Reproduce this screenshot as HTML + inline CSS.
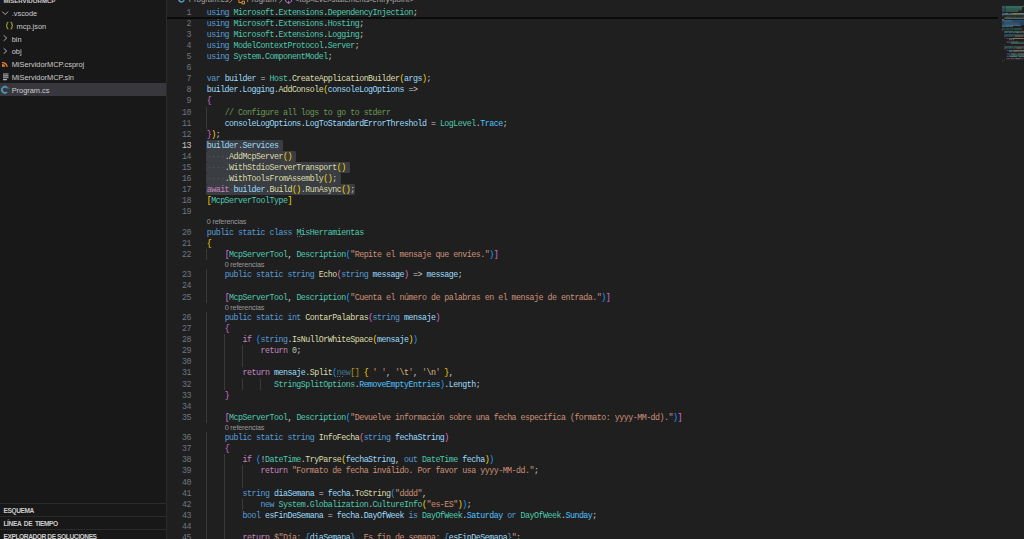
<!DOCTYPE html><html><head><meta charset="utf-8"><style>
*{margin:0;padding:0;box-sizing:border-box}
html,body{width:1024px;height:539px;overflow:hidden;background:#1f1f1f}
body{position:relative;font-family:"Liberation Sans",sans-serif}
#side{position:absolute;left:0;top:0;width:166px;height:539px;background:#181818;overflow:hidden}
#sideb{position:absolute;left:166px;top:0;width:1px;height:539px;background:#2b2b2b}
.row{position:absolute;left:0;width:166px;height:12.9px;color:#cccccc;font-size:7.4px;line-height:12.9px;white-space:nowrap}
.row.selr{background:#37373d}
.row .tx{position:absolute;top:0}
.hdr{position:absolute;left:0;width:166px;height:13px;border-top:1px solid #2b2b2b;color:#cccccc;font-size:6.05px;font-weight:bold;line-height:12px;padding-left:3.5px;white-space:nowrap}
.ln{position:absolute;left:170px;letter-spacing:-0.495px;width:21.00px;text-align:right;color:#6e7681;font-family:"Liberation Mono",monospace;font-size:8.3px;line-height:11.07px;height:11.07px;white-space:pre}
.ln.act{color:#cccccc}
.cl{position:absolute;left:206.7px;letter-spacing:-0.495px;font-family:"Liberation Mono",monospace;font-size:8.3px;line-height:11.07px;height:11.07px;white-space:pre;color:#cccccc}
.lens{position:absolute;font-size:7.2px;letter-spacing:-0.15px;line-height:9.48px;color:#999999;white-space:pre}
.sel{position:absolute;background:#3a3d41;border-radius:1.5px}
.guide{position:absolute;width:1px;background:#3a3a3a}
.mm{position:absolute;height:0.9px;opacity:0.55}
.k{color:#569cd6}.c{color:#c586c0}.t{color:#4ec9b0}.f{color:#dcdcaa}.v{color:#9cdcfe}.s{color:#ce9178}.m{color:#6a9955}.n{color:#b5cea8}.p{color:#cccccc}.e{color:#4fc1ff}.w{color:#5a5a5a}.x{color:#d7ba7d}.b1{color:#ffd700}.b2{color:#da70d6}.b3{color:#179fff}.K{color:#44739a}.B{color:#b59a0a}</style></head><body><div id="side"><div style="position:absolute;left:0;top:83.4px;width:166px;height:12.7px;background:#37373d"></div><div style="position:absolute;left:3.40px;top:0.89px;font-family:'Liberation Sans',sans-serif;font-size:6.1px;line-height:0;color:#cccccc;font-weight:bold;letter-spacing:0px;white-space:pre">MISERVIDORMCP</div><div style="position:absolute;left:11.70px;top:14.04px;font-family:'Liberation Sans',sans-serif;font-size:7.4px;line-height:0;color:#cccccc;font-weight:normal;letter-spacing:0px;white-space:pre">.vscode</div><div style="position:absolute;left:16.60px;top:26.84px;font-family:'Liberation Sans',sans-serif;font-size:7.4px;line-height:0;color:#cccccc;font-weight:normal;letter-spacing:0px;white-space:pre">mcp.json</div><div style="position:absolute;left:11.70px;top:39.64px;font-family:'Liberation Sans',sans-serif;font-size:7.4px;line-height:0;color:#cccccc;font-weight:normal;letter-spacing:0px;white-space:pre">bin</div><div style="position:absolute;left:11.70px;top:52.44px;font-family:'Liberation Sans',sans-serif;font-size:7.4px;line-height:0;color:#cccccc;font-weight:normal;letter-spacing:0px;white-space:pre">obj</div><div style="position:absolute;left:11.70px;top:65.24px;font-family:'Liberation Sans',sans-serif;font-size:7.4px;line-height:0;color:#cccccc;font-weight:normal;letter-spacing:0px;white-space:pre">MiServidorMCP.csproj</div><div style="position:absolute;left:11.70px;top:78.04px;font-family:'Liberation Sans',sans-serif;font-size:7.4px;line-height:0;color:#cccccc;font-weight:normal;letter-spacing:0px;white-space:pre">MiServidorMCP.sln</div><div style="position:absolute;left:11.70px;top:90.84px;font-family:'Liberation Sans',sans-serif;font-size:7.4px;line-height:0;color:#cccccc;font-weight:normal;letter-spacing:0px;white-space:pre">Program.cs</div><div style="position:absolute;left:0;top:503.00px;width:166px;height:1px;background:#2b2b2b"></div><div style="position:absolute;left:3.50px;top:510.51px;font-family:'Liberation Sans',sans-serif;font-size:6.6px;line-height:0;color:#cccccc;font-weight:bold;letter-spacing:-0.41px;white-space:pre;word-spacing:0px">ESQUEMA</div><div style="position:absolute;left:0;top:516.10px;width:166px;height:1px;background:#2b2b2b"></div><div style="position:absolute;left:3.50px;top:523.61px;font-family:'Liberation Sans',sans-serif;font-size:6.6px;line-height:0;color:#cccccc;font-weight:bold;letter-spacing:-0.41px;white-space:pre;word-spacing:1.4px">LÍNEA DE TIEMPO</div><div style="position:absolute;left:0;top:529.20px;width:166px;height:1px;background:#2b2b2b"></div><div style="position:absolute;left:3.50px;top:536.71px;font-family:'Liberation Sans',sans-serif;font-size:6.6px;line-height:0;color:#cccccc;font-weight:bold;letter-spacing:-0.41px;white-space:pre;word-spacing:0px">EXPLORADOR DE SOLUCIONES</div><svg style="position:absolute;left:0;top:0" width="166" height="100" viewBox="0 0 166 100">
<path d="M2.3 11.6 L5.2 14.5 L8.1 11.6" stroke="#c5c5c5" stroke-width="0.85" fill="none"/>
<path d="M8.4 22.3 H7.9 Q7.1 22.3 7.1 23.2 V24.9 L6.1 25.6 L7.1 26.3 V28 Q7.1 28.9 7.9 28.9 H8.4" stroke="#a8c93f" stroke-width="0.9" fill="none"/>
<path d="M10.6 22.3 H11.1 Q11.9 22.3 11.9 23.2 V24.9 L12.9 25.6 L11.9 26.3 V28 Q11.9 28.9 11.1 28.9 H10.6" stroke="#e0c43a" stroke-width="0.9" fill="none"/>
<path d="M3.7 35.4 L6.7 38.1 L3.7 40.8" stroke="#c5c5c5" stroke-width="0.85" fill="none"/>
<path d="M3.7 48.3 L6.7 51.0 L3.7 53.7" stroke="#c5c5c5" stroke-width="0.85" fill="none"/>
<path d="M2 62 A5 5 0 0 1 7.8 66.8 L6.3 66.8 A3.6 3.6 0 0 0 2 63.4 Z M2 64.2 A2.8 2.8 0 0 1 5.3 66.8 L2 66.8 Z" fill="#e37933"/>
<path d="M3 74 H8.5 M3 75.9 H8.5 M3 77.8 H8.5 M3 79.6 H7" stroke="#b0b0b0" stroke-width="1.1" fill="none"/>
<path d="M7.0 87.7 A3.0 3.0 0 1 0 7.0 92.0" stroke="#519aba" stroke-width="1.7" fill="none"/>
<circle cx="7.9" cy="88.0" r="0.7" fill="#519aba"/>
</svg></div><div id="sideb"></div><div style="position:absolute;left:188.80px;top:-0.00px;font-family:'Liberation Sans',sans-serif;font-size:7.8px;line-height:0;color:#a9a9a9;font-weight:normal;letter-spacing:0px;white-space:pre">Program.cs</div><div style="position:absolute;left:246.50px;top:-0.00px;font-family:'Liberation Sans',sans-serif;font-size:7.8px;line-height:0;color:#a9a9a9;font-weight:normal;letter-spacing:0px;white-space:pre">Program</div><div style="position:absolute;left:295.00px;top:-0.00px;font-family:'Liberation Sans',sans-serif;font-size:7.8px;line-height:0;color:#a9a9a9;font-weight:normal;letter-spacing:0px;white-space:pre">&lt;top-level-statements-entry-point&gt;</div><svg style="position:absolute;left:170px;top:0" width="130" height="8" viewBox="170 0 130 8">
<path d="M184.2 0.2 A2.9 2.9 0 1 1 184.4 -1.6" stroke="#519aba" stroke-width="1.5" fill="none"/>
<path d="M229.2 2.9 L232.3 -0.2 M279.2 2.9 L282.3 -0.2" stroke="#a0a0a0" stroke-width="0.8" fill="none"/>
<path d="M238.9 -1 V2.6 H242 M242 1.2 V3.9 H244.5 V1.2 Z" stroke="#ee9d28" stroke-width="0.9" fill="none"/>
<path d="M285.6 -1 V1.4 L288.6 3.4 L291.6 1.4 V-1 M288.6 0.8 V3.4" stroke="#b180d7" stroke-width="0.9" fill="none"/>
</svg><div style="position:absolute;left:167px;top:17.1px;width:830.8px;height:1.8px;background:#0b0b0b;box-shadow:0 0 0.6px #0b0b0b"></div><div class="sel" style="top:139.74px;left:205.70px;width:77.25px;height:11.07px"></div><div class="sel" style="top:150.81px;left:205.70px;width:90.70px;height:11.07px"></div><div class="sel" style="top:161.88px;left:205.70px;width:144.52px;height:11.07px"></div><div class="sel" style="top:172.95px;left:205.70px;width:135.55px;height:11.07px"></div><div class="sel" style="top:184.02px;left:205.70px;width:149.01px;height:11.07px"></div><div class="guide" style="left:206.20px;top:106.53px;height:22.14px"></div><div class="guide" style="left:206.20px;top:248.85px;height:11.07px"></div><div class="guide" style="left:206.20px;top:269.40px;height:33.21px"></div><div class="guide" style="left:206.20px;top:312.09px;height:110.70px"></div><div class="guide" style="left:206.20px;top:432.27px;height:110.70px"></div><div class="guide" style="left:224.14px;top:334.23px;height:55.35px"></div><div class="guide" style="left:224.14px;top:454.41px;height:88.56px"></div><div class="guide" style="left:242.08px;top:345.30px;height:22.14px"></div><div class="guide" style="left:242.08px;top:378.51px;height:11.07px"></div><div class="guide" style="left:260.02px;top:378.51px;height:11.07px"></div><div class="guide" style="left:242.08px;top:465.48px;height:22.14px"></div><div class="guide" style="left:242.08px;top:498.69px;height:11.07px"></div><div style="position:absolute;left:296.80px;top:235.61px;width:1px;height:1px;background:#707070"></div><div style="position:absolute;left:299.00px;top:235.61px;width:1px;height:1px;background:#707070"></div><div style="position:absolute;left:301.20px;top:235.61px;width:1px;height:1px;background:#707070"></div><div style="position:absolute;left:337.16px;top:376.34px;width:1px;height:1px;background:#707070"></div><div style="position:absolute;left:339.36px;top:376.34px;width:1px;height:1px;background:#707070"></div><div style="position:absolute;left:341.56px;top:376.34px;width:1px;height:1px;background:#707070"></div><div class="ln" style="top:6.90px">1</div><div class="ln" style="top:17.97px">2</div><div class="ln" style="top:29.04px">3</div><div class="ln" style="top:40.11px">4</div><div class="ln" style="top:51.18px">5</div><div class="ln" style="top:62.25px">6</div><div class="ln" style="top:73.32px">7</div><div class="ln" style="top:84.39px">8</div><div class="ln" style="top:95.46px">9</div><div class="ln" style="top:106.53px">10</div><div class="ln" style="top:117.60px">11</div><div class="ln" style="top:128.67px">12</div><div class="ln act" style="top:139.74px">13</div><div class="ln" style="top:150.81px">14</div><div class="ln" style="top:161.88px">15</div><div class="ln" style="top:172.95px">16</div><div class="ln" style="top:184.02px">17</div><div class="ln" style="top:195.09px">18</div><div class="ln" style="top:206.16px">19</div><div class="ln" style="top:226.71px">20</div><div class="ln" style="top:237.78px">21</div><div class="ln" style="top:248.85px">22</div><div class="ln" style="top:269.40px">23</div><div class="ln" style="top:280.47px">24</div><div class="ln" style="top:291.54px">25</div><div class="ln" style="top:312.09px">26</div><div class="ln" style="top:323.16px">27</div><div class="ln" style="top:334.23px">28</div><div class="ln" style="top:345.30px">29</div><div class="ln" style="top:356.37px">30</div><div class="ln" style="top:367.44px">31</div><div class="ln" style="top:378.51px">32</div><div class="ln" style="top:389.58px">33</div><div class="ln" style="top:400.65px">34</div><div class="ln" style="top:411.72px">35</div><div class="ln" style="top:432.27px">36</div><div class="ln" style="top:443.34px">37</div><div class="ln" style="top:454.41px">38</div><div class="ln" style="top:465.48px">39</div><div class="ln" style="top:476.55px">40</div><div class="ln" style="top:487.62px">41</div><div class="ln" style="top:498.69px">42</div><div class="ln" style="top:509.76px">43</div><div class="ln" style="top:520.83px">44</div><div class="ln" style="top:531.90px">45</div><div class="cl" style="top:6.90px"><span class="k">using</span> <span class="t">Microsoft</span><span class="p">.</span><span class="t">Extensions</span><span class="p">.</span><span class="t">DependencyInjection</span><span class="p">;</span></div><div class="cl" style="top:17.97px"><span class="k">using</span> <span class="t">Microsoft</span><span class="p">.</span><span class="t">Extensions</span><span class="p">.</span><span class="t">Hosting</span><span class="p">;</span></div><div class="cl" style="top:29.04px"><span class="k">using</span> <span class="t">Microsoft</span><span class="p">.</span><span class="t">Extensions</span><span class="p">.</span><span class="t">Logging</span><span class="p">;</span></div><div class="cl" style="top:40.11px"><span class="k">using</span> <span class="t">ModelContextProtocol</span><span class="p">.</span><span class="t">Server</span><span class="p">;</span></div><div class="cl" style="top:51.18px"><span class="k">using</span> <span class="t">System</span><span class="p">.</span><span class="t">ComponentModel</span><span class="p">;</span></div><div class="cl" style="top:62.25px"></div><div class="cl" style="top:73.32px"><span class="k">var</span> <span class="v">builder</span> <span class="p">=</span> <span class="t">Host</span><span class="p">.</span><span class="f">CreateApplicationBuilder</span><span class="b1">(</span><span class="v">args</span><span class="b1">)</span><span class="p">;</span></div><div class="cl" style="top:84.39px"><span class="v">builder</span><span class="p">.</span><span class="v">Logging</span><span class="p">.</span><span class="f">AddConsole</span><span class="b1">(</span><span class="v">consoleLogOptions</span> <span class="p">=&gt;</span></div><div class="cl" style="top:95.46px"><span class="b2">{</span></div><div class="cl" style="top:106.53px">    <span class="m">// Configure all logs to go to stderr</span></div><div class="cl" style="top:117.60px">    <span class="v">consoleLogOptions</span><span class="p">.</span><span class="v">LogToStandardErrorThreshold</span> <span class="p">=</span> <span class="t">LogLevel</span><span class="p">.</span><span class="e">Trace</span><span class="p">;</span></div><div class="cl" style="top:128.67px"><span class="b2">}</span><span class="b1">)</span><span class="p">;</span></div><div class="cl" style="top:139.74px"><span class="v">builder</span><span class="p">.</span><span class="v">Services</span></div><div class="cl" style="top:150.81px"><span class="w">····</span><span class="p">.</span><span class="f">AddMcpServer</span><span class="b1">()</span></div><div class="cl" style="top:161.88px"><span class="w">····</span><span class="p">.</span><span class="f">WithStdioServerTransport</span><span class="b1">()</span></div><div class="cl" style="top:172.95px"><span class="w">····</span><span class="p">.</span><span class="f">WithToolsFromAssembly</span><span class="b1">()</span><span class="p">;</span></div><div class="cl" style="top:184.02px"><span class="c">await</span><span class="w">·</span><span class="v">builder</span><span class="p">.</span><span class="f">Build</span><span class="b1">()</span><span class="p">.</span><span class="f">RunAsync</span><span class="b1">()</span><span class="p">;</span></div><div class="cl" style="top:195.09px"><span class="b1">[</span><span class="t">McpServerToolType</span><span class="b1">]</span></div><div class="cl" style="top:206.16px"></div><div class="cl" style="top:226.71px"><span class="k">public</span> <span class="k">static</span> <span class="k">class</span> <span class="t">MisHerramientas</span></div><div class="cl" style="top:237.78px"><span class="b1">{</span></div><div class="cl" style="top:248.85px">    <span class="b2">[</span><span class="t">McpServerTool</span><span class="p">,</span> <span class="t">Description</span><span class="b3">(</span><span class="s">&quot;Repite el mensaje que envíes.&quot;</span><span class="b3">)</span><span class="b2">]</span></div><div class="cl" style="top:269.40px">    <span class="k">public</span> <span class="k">static</span> <span class="k">string</span> <span class="f">Echo</span><span class="b2">(</span><span class="k">string</span> <span class="v">message</span><span class="b2">)</span> <span class="p">=&gt;</span> <span class="v">message</span><span class="p">;</span></div><div class="cl" style="top:280.47px"></div><div class="cl" style="top:291.54px">    <span class="b2">[</span><span class="t">McpServerTool</span><span class="p">,</span> <span class="t">Description</span><span class="b3">(</span><span class="s">&quot;Cuenta el número de palabras en el mensaje de entrada.&quot;</span><span class="b3">)</span><span class="b2">]</span></div><div class="cl" style="top:312.09px">    <span class="k">public</span> <span class="k">static</span> <span class="k">int</span> <span class="f">ContarPalabras</span><span class="b2">(</span><span class="k">string</span> <span class="v">mensaje</span><span class="b2">)</span></div><div class="cl" style="top:323.16px">    <span class="b2">{</span></div><div class="cl" style="top:334.23px">        <span class="c">if</span> <span class="b3">(</span><span class="k">string</span><span class="p">.</span><span class="f">IsNullOrWhiteSpace</span><span class="b1">(</span><span class="v">mensaje</span><span class="b1">)</span><span class="b3">)</span></div><div class="cl" style="top:345.30px">            <span class="c">return</span> <span class="n">0</span><span class="p">;</span></div><div class="cl" style="top:356.37px"></div><div class="cl" style="top:367.44px">        <span class="c">return</span> <span class="v">mensaje</span><span class="p">.</span><span class="f">Split</span><span class="b3">(</span><span class="K">new</span><span class="B">[]</span> <span class="b1">{</span> <span class="s">&#x27; &#x27;</span><span class="p">,</span> <span class="s">&#x27;</span><span class="x">\t</span><span class="s">&#x27;</span><span class="p">,</span> <span class="s">&#x27;</span><span class="x">\n</span><span class="s">&#x27;</span> <span class="b1">}</span><span class="p">,</span></div><div class="cl" style="top:378.51px">               <span class="t">StringSplitOptions</span><span class="p">.</span><span class="e">RemoveEmptyEntries</span><span class="b3">)</span><span class="p">.</span><span class="v">Length</span><span class="p">;</span></div><div class="cl" style="top:389.58px">    <span class="b2">}</span></div><div class="cl" style="top:400.65px"></div><div class="cl" style="top:411.72px">    <span class="b2">[</span><span class="t">McpServerTool</span><span class="p">,</span> <span class="t">Description</span><span class="b3">(</span><span class="s">&quot;Devuelve información sobre una fecha específica (formato: yyyy-MM-dd).&quot;</span><span class="b3">)</span><span class="b2">]</span></div><div class="cl" style="top:432.27px">    <span class="k">public</span> <span class="k">static</span> <span class="k">string</span> <span class="f">InfoFecha</span><span class="b2">(</span><span class="k">string</span> <span class="v">fechaString</span><span class="b2">)</span></div><div class="cl" style="top:443.34px">    <span class="b2">{</span></div><div class="cl" style="top:454.41px">        <span class="c">if</span> <span class="b3">(</span><span class="p">!</span><span class="t">DateTime</span><span class="p">.</span><span class="f">TryParse</span><span class="b1">(</span><span class="v">fechaString</span><span class="p">,</span> <span class="k">out</span> <span class="t">DateTime</span> <span class="v">fecha</span><span class="b1">)</span><span class="b3">)</span></div><div class="cl" style="top:465.48px">            <span class="c">return</span> <span class="s">&quot;Formato de fecha inválido. Por favor usa yyyy-MM-dd.&quot;</span><span class="p">;</span></div><div class="cl" style="top:476.55px"></div><div class="cl" style="top:487.62px">        <span class="k">string</span> <span class="v">diaSemana</span> <span class="p">=</span> <span class="v">fecha</span><span class="p">.</span><span class="f">ToString</span><span class="b3">(</span><span class="s">&quot;dddd&quot;</span><span class="p">,</span></div><div class="cl" style="top:498.69px">            <span class="k">new</span> <span class="t">System</span><span class="p">.</span><span class="t">Globalization</span><span class="p">.</span><span class="t">CultureInfo</span><span class="b1">(</span><span class="s">&quot;es-ES&quot;</span><span class="b1">)</span><span class="b3">)</span><span class="p">;</span></div><div class="cl" style="top:509.76px">        <span class="k">bool</span> <span class="v">esFinDeSemana</span> <span class="p">=</span> <span class="v">fecha</span><span class="p">.</span><span class="v">DayOfWeek</span> <span class="k">is</span> <span class="t">DayOfWeek</span><span class="p">.</span><span class="e">Saturday</span> <span class="k">or</span> <span class="t">DayOfWeek</span><span class="p">.</span><span class="e">Sunday</span><span class="p">;</span></div><div class="cl" style="top:520.83px"></div><div class="cl" style="top:531.90px">        <span class="c">return</span> <span class="s">$&quot;Día: </span><span class="k">{</span><span class="v">diaSemana</span><span class="k">}</span><span class="s">, Es fin de semana: </span><span class="k">{</span><span class="v">esFinDeSemana</span><span class="k">}</span><span class="s">&quot;</span><span class="p">;</span></div><div class="lens" style="top:217.23px;left:206.70px">0 referencias</div><div class="lens" style="top:259.92px;left:224.64px">0 referencias</div><div class="lens" style="top:302.61px;left:224.64px">0 referencias</div><div class="lens" style="top:422.79px;left:224.64px">0 referencias</div><div id="mm"><svg style="position:absolute;left:0;top:0" width="1024" height="70" viewBox="0 0 1024 70"><rect x="1002.00" y="5.90" width="2.88" height="0.95" fill="#569cd6" fill-opacity="0.5"/><rect x="1005.45" y="5.90" width="5.17" height="0.95" fill="#4ec9b0" fill-opacity="0.5"/><rect x="1010.62" y="5.90" width="0.57" height="0.95" fill="#cccccc" fill-opacity="0.5"/><rect x="1011.20" y="5.90" width="5.75" height="0.95" fill="#4ec9b0" fill-opacity="0.5"/><rect x="1016.95" y="5.90" width="0.57" height="0.95" fill="#cccccc" fill-opacity="0.5"/><rect x="1017.52" y="5.90" width="10.92" height="0.95" fill="#4ec9b0" fill-opacity="0.5"/><rect x="1002.00" y="7.09" width="2.88" height="0.95" fill="#569cd6" fill-opacity="0.5"/><rect x="1005.45" y="7.09" width="5.17" height="0.95" fill="#4ec9b0" fill-opacity="0.5"/><rect x="1010.62" y="7.09" width="0.57" height="0.95" fill="#cccccc" fill-opacity="0.5"/><rect x="1011.20" y="7.09" width="5.75" height="0.95" fill="#4ec9b0" fill-opacity="0.5"/><rect x="1016.95" y="7.09" width="0.57" height="0.95" fill="#cccccc" fill-opacity="0.5"/><rect x="1017.52" y="7.09" width="4.02" height="0.95" fill="#4ec9b0" fill-opacity="0.5"/><rect x="1021.55" y="7.09" width="0.57" height="0.95" fill="#cccccc" fill-opacity="0.5"/><rect x="1002.00" y="8.28" width="2.88" height="0.95" fill="#569cd6" fill-opacity="0.5"/><rect x="1005.45" y="8.28" width="5.17" height="0.95" fill="#4ec9b0" fill-opacity="0.5"/><rect x="1010.62" y="8.28" width="0.57" height="0.95" fill="#cccccc" fill-opacity="0.5"/><rect x="1011.20" y="8.28" width="5.75" height="0.95" fill="#4ec9b0" fill-opacity="0.5"/><rect x="1016.95" y="8.28" width="0.57" height="0.95" fill="#cccccc" fill-opacity="0.5"/><rect x="1017.52" y="8.28" width="4.02" height="0.95" fill="#4ec9b0" fill-opacity="0.5"/><rect x="1021.55" y="8.28" width="0.57" height="0.95" fill="#cccccc" fill-opacity="0.5"/><rect x="1002.00" y="9.47" width="2.88" height="0.95" fill="#569cd6" fill-opacity="0.5"/><rect x="1005.45" y="9.47" width="11.50" height="0.95" fill="#4ec9b0" fill-opacity="0.5"/><rect x="1016.95" y="9.47" width="0.57" height="0.95" fill="#cccccc" fill-opacity="0.5"/><rect x="1017.52" y="9.47" width="3.45" height="0.95" fill="#4ec9b0" fill-opacity="0.5"/><rect x="1020.98" y="9.47" width="0.57" height="0.95" fill="#cccccc" fill-opacity="0.5"/><rect x="1002.00" y="10.66" width="2.88" height="0.95" fill="#569cd6" fill-opacity="0.5"/><rect x="1005.45" y="10.66" width="3.45" height="0.95" fill="#4ec9b0" fill-opacity="0.5"/><rect x="1008.90" y="10.66" width="0.57" height="0.95" fill="#cccccc" fill-opacity="0.5"/><rect x="1009.48" y="10.66" width="8.05" height="0.95" fill="#4ec9b0" fill-opacity="0.5"/><rect x="1017.52" y="10.66" width="0.57" height="0.95" fill="#cccccc" fill-opacity="0.5"/><rect x="1002.00" y="13.04" width="1.72" height="0.95" fill="#569cd6" fill-opacity="0.5"/><rect x="1004.30" y="13.04" width="4.02" height="0.95" fill="#9cdcfe" fill-opacity="0.5"/><rect x="1008.90" y="13.04" width="0.57" height="0.95" fill="#cccccc" fill-opacity="0.5"/><rect x="1010.05" y="13.04" width="2.30" height="0.95" fill="#4ec9b0" fill-opacity="0.5"/><rect x="1012.35" y="13.04" width="0.57" height="0.95" fill="#cccccc" fill-opacity="0.5"/><rect x="1012.92" y="13.04" width="13.80" height="0.95" fill="#dcdcaa" fill-opacity="0.5"/><rect x="1002.00" y="14.23" width="4.02" height="0.95" fill="#9cdcfe" fill-opacity="0.5"/><rect x="1006.02" y="14.23" width="0.57" height="0.95" fill="#cccccc" fill-opacity="0.5"/><rect x="1006.60" y="14.23" width="4.02" height="0.95" fill="#9cdcfe" fill-opacity="0.5"/><rect x="1010.62" y="14.23" width="0.57" height="0.95" fill="#cccccc" fill-opacity="0.5"/><rect x="1011.20" y="14.23" width="5.75" height="0.95" fill="#dcdcaa" fill-opacity="0.5"/><rect x="1016.95" y="14.23" width="0.57" height="0.95" fill="#ffd700" fill-opacity="0.5"/><rect x="1017.52" y="14.23" width="9.77" height="0.95" fill="#9cdcfe" fill-opacity="0.5"/><rect x="1002.00" y="15.42" width="0.57" height="0.95" fill="#da70d6" fill-opacity="0.5"/><rect x="1004.30" y="16.61" width="1.15" height="0.95" fill="#6a9955" fill-opacity="0.5"/><rect x="1006.02" y="16.61" width="5.17" height="0.95" fill="#6a9955" fill-opacity="0.5"/><rect x="1011.77" y="16.61" width="1.72" height="0.95" fill="#6a9955" fill-opacity="0.5"/><rect x="1014.08" y="16.61" width="2.30" height="0.95" fill="#6a9955" fill-opacity="0.5"/><rect x="1016.95" y="16.61" width="1.15" height="0.95" fill="#6a9955" fill-opacity="0.5"/><rect x="1018.67" y="16.61" width="1.15" height="0.95" fill="#6a9955" fill-opacity="0.5"/><rect x="1020.40" y="16.61" width="1.15" height="0.95" fill="#6a9955" fill-opacity="0.5"/><rect x="1022.12" y="16.61" width="3.45" height="0.95" fill="#6a9955" fill-opacity="0.5"/><rect x="1004.30" y="17.80" width="9.77" height="0.95" fill="#9cdcfe" fill-opacity="0.5"/><rect x="1014.08" y="17.80" width="0.57" height="0.95" fill="#cccccc" fill-opacity="0.5"/><rect x="1014.65" y="17.80" width="15.52" height="0.95" fill="#9cdcfe" fill-opacity="0.5"/><rect x="1002.00" y="18.99" width="0.57" height="0.95" fill="#da70d6" fill-opacity="0.5"/><rect x="1002.58" y="18.99" width="0.57" height="0.95" fill="#ffd700" fill-opacity="0.5"/><rect x="1003.15" y="18.99" width="0.57" height="0.95" fill="#cccccc" fill-opacity="0.5"/><rect x="1002.00" y="20.08" width="34.50" height="1.19" fill="#264f78"/><rect x="1002.00" y="20.18" width="4.02" height="0.95" fill="#9cdcfe" fill-opacity="0.175"/><rect x="1006.02" y="20.18" width="0.57" height="0.95" fill="#cccccc" fill-opacity="0.175"/><rect x="1006.60" y="20.18" width="4.60" height="0.95" fill="#9cdcfe" fill-opacity="0.175"/><rect x="1002.00" y="21.27" width="34.50" height="1.19" fill="#264f78"/><rect x="1004.30" y="21.37" width="0.57" height="0.95" fill="#cccccc" fill-opacity="0.175"/><rect x="1004.88" y="21.37" width="6.90" height="0.95" fill="#dcdcaa" fill-opacity="0.175"/><rect x="1011.77" y="21.37" width="1.15" height="0.95" fill="#ffd700" fill-opacity="0.175"/><rect x="1002.00" y="22.46" width="34.50" height="1.19" fill="#264f78"/><rect x="1004.30" y="22.56" width="0.57" height="0.95" fill="#cccccc" fill-opacity="0.175"/><rect x="1004.88" y="22.56" width="13.80" height="0.95" fill="#dcdcaa" fill-opacity="0.175"/><rect x="1018.67" y="22.56" width="1.15" height="0.95" fill="#ffd700" fill-opacity="0.175"/><rect x="1002.00" y="23.65" width="34.50" height="1.19" fill="#264f78"/><rect x="1004.30" y="23.75" width="0.57" height="0.95" fill="#cccccc" fill-opacity="0.175"/><rect x="1004.88" y="23.75" width="12.07" height="0.95" fill="#dcdcaa" fill-opacity="0.175"/><rect x="1016.95" y="23.75" width="1.15" height="0.95" fill="#ffd700" fill-opacity="0.175"/><rect x="1018.10" y="23.75" width="0.57" height="0.95" fill="#cccccc" fill-opacity="0.175"/><rect x="1002.00" y="24.84" width="18.97" height="1.19" fill="#264f78"/><rect x="1002.00" y="24.94" width="2.88" height="0.95" fill="#c586c0" fill-opacity="0.175"/><rect x="1005.45" y="24.94" width="4.02" height="0.95" fill="#9cdcfe" fill-opacity="0.175"/><rect x="1009.48" y="24.94" width="0.57" height="0.95" fill="#cccccc" fill-opacity="0.175"/><rect x="1010.05" y="24.94" width="2.88" height="0.95" fill="#dcdcaa" fill-opacity="0.175"/><rect x="1012.92" y="24.94" width="1.15" height="0.95" fill="#ffd700" fill-opacity="0.175"/><rect x="1014.08" y="24.94" width="0.57" height="0.95" fill="#cccccc" fill-opacity="0.175"/><rect x="1014.65" y="24.94" width="4.60" height="0.95" fill="#dcdcaa" fill-opacity="0.175"/><rect x="1019.25" y="24.94" width="1.15" height="0.95" fill="#ffd700" fill-opacity="0.175"/><rect x="1020.40" y="24.94" width="0.57" height="0.95" fill="#cccccc" fill-opacity="0.175"/><rect x="1002.00" y="26.13" width="0.57" height="0.95" fill="#ffd700" fill-opacity="0.5"/><rect x="1002.58" y="26.13" width="9.77" height="0.95" fill="#4ec9b0" fill-opacity="0.5"/><rect x="1012.35" y="26.13" width="0.57" height="0.95" fill="#ffd700" fill-opacity="0.5"/><rect x="1002.00" y="28.51" width="3.45" height="0.95" fill="#569cd6" fill-opacity="0.5"/><rect x="1006.02" y="28.51" width="3.45" height="0.95" fill="#569cd6" fill-opacity="0.5"/><rect x="1010.05" y="28.51" width="2.88" height="0.95" fill="#569cd6" fill-opacity="0.5"/><rect x="1013.50" y="28.51" width="8.62" height="0.95" fill="#4ec9b0" fill-opacity="0.5"/><rect x="1002.00" y="29.70" width="0.57" height="0.95" fill="#ffd700" fill-opacity="0.5"/><rect x="1004.30" y="30.89" width="0.57" height="0.95" fill="#da70d6" fill-opacity="0.5"/><rect x="1004.88" y="30.89" width="7.47" height="0.95" fill="#4ec9b0" fill-opacity="0.5"/><rect x="1012.35" y="30.89" width="0.57" height="0.95" fill="#cccccc" fill-opacity="0.5"/><rect x="1013.50" y="30.89" width="6.32" height="0.95" fill="#4ec9b0" fill-opacity="0.5"/><rect x="1019.83" y="30.89" width="0.57" height="0.95" fill="#179fff" fill-opacity="0.5"/><rect x="1020.40" y="30.89" width="4.02" height="0.95" fill="#ce9178" fill-opacity="0.5"/><rect x="1004.30" y="32.08" width="3.45" height="0.95" fill="#569cd6" fill-opacity="0.5"/><rect x="1008.33" y="32.08" width="3.45" height="0.95" fill="#569cd6" fill-opacity="0.5"/><rect x="1012.35" y="32.08" width="3.45" height="0.95" fill="#569cd6" fill-opacity="0.5"/><rect x="1016.38" y="32.08" width="2.30" height="0.95" fill="#dcdcaa" fill-opacity="0.5"/><rect x="1018.67" y="32.08" width="0.57" height="0.95" fill="#da70d6" fill-opacity="0.5"/><rect x="1019.25" y="32.08" width="3.45" height="0.95" fill="#569cd6" fill-opacity="0.5"/><rect x="1023.27" y="32.08" width="4.02" height="0.95" fill="#9cdcfe" fill-opacity="0.5"/><rect x="1004.30" y="34.46" width="0.57" height="0.95" fill="#da70d6" fill-opacity="0.5"/><rect x="1004.88" y="34.46" width="7.47" height="0.95" fill="#4ec9b0" fill-opacity="0.5"/><rect x="1012.35" y="34.46" width="0.57" height="0.95" fill="#cccccc" fill-opacity="0.5"/><rect x="1013.50" y="34.46" width="6.32" height="0.95" fill="#4ec9b0" fill-opacity="0.5"/><rect x="1019.83" y="34.46" width="0.57" height="0.95" fill="#179fff" fill-opacity="0.5"/><rect x="1020.40" y="34.46" width="4.02" height="0.95" fill="#ce9178" fill-opacity="0.5"/><rect x="1004.30" y="35.65" width="3.45" height="0.95" fill="#569cd6" fill-opacity="0.5"/><rect x="1008.33" y="35.65" width="3.45" height="0.95" fill="#569cd6" fill-opacity="0.5"/><rect x="1012.35" y="35.65" width="1.72" height="0.95" fill="#569cd6" fill-opacity="0.5"/><rect x="1014.65" y="35.65" width="8.05" height="0.95" fill="#dcdcaa" fill-opacity="0.5"/><rect x="1022.70" y="35.65" width="0.57" height="0.95" fill="#da70d6" fill-opacity="0.5"/><rect x="1023.27" y="35.65" width="3.45" height="0.95" fill="#569cd6" fill-opacity="0.5"/><rect x="1004.30" y="36.84" width="0.57" height="0.95" fill="#da70d6" fill-opacity="0.5"/><rect x="1006.60" y="38.03" width="1.15" height="0.95" fill="#c586c0" fill-opacity="0.5"/><rect x="1008.33" y="38.03" width="0.57" height="0.95" fill="#179fff" fill-opacity="0.5"/><rect x="1008.90" y="38.03" width="3.45" height="0.95" fill="#569cd6" fill-opacity="0.5"/><rect x="1012.35" y="38.03" width="0.57" height="0.95" fill="#cccccc" fill-opacity="0.5"/><rect x="1012.92" y="38.03" width="10.35" height="0.95" fill="#dcdcaa" fill-opacity="0.5"/><rect x="1023.27" y="38.03" width="0.57" height="0.95" fill="#ffd700" fill-opacity="0.5"/><rect x="1023.85" y="38.03" width="4.02" height="0.95" fill="#9cdcfe" fill-opacity="0.5"/><rect x="1008.90" y="39.22" width="3.45" height="0.95" fill="#c586c0" fill-opacity="0.5"/><rect x="1012.92" y="39.22" width="0.57" height="0.95" fill="#b5cea8" fill-opacity="0.5"/><rect x="1013.50" y="39.22" width="0.57" height="0.95" fill="#cccccc" fill-opacity="0.5"/><rect x="1006.60" y="41.60" width="3.45" height="0.95" fill="#c586c0" fill-opacity="0.5"/><rect x="1010.62" y="41.60" width="4.02" height="0.95" fill="#9cdcfe" fill-opacity="0.5"/><rect x="1014.65" y="41.60" width="0.57" height="0.95" fill="#cccccc" fill-opacity="0.5"/><rect x="1015.23" y="41.60" width="2.88" height="0.95" fill="#dcdcaa" fill-opacity="0.5"/><rect x="1018.10" y="41.60" width="0.57" height="0.95" fill="#179fff" fill-opacity="0.5"/><rect x="1018.67" y="41.60" width="1.72" height="0.95" fill="#44739a" fill-opacity="0.5"/><rect x="1020.40" y="41.60" width="1.15" height="0.95" fill="#b59a0a" fill-opacity="0.5"/><rect x="1022.12" y="41.60" width="0.57" height="0.95" fill="#ffd700" fill-opacity="0.5"/><rect x="1023.27" y="41.60" width="0.57" height="0.95" fill="#ce9178" fill-opacity="0.5"/><rect x="1010.62" y="42.79" width="10.35" height="0.95" fill="#4ec9b0" fill-opacity="0.5"/><rect x="1020.98" y="42.79" width="0.57" height="0.95" fill="#cccccc" fill-opacity="0.5"/><rect x="1021.55" y="42.79" width="10.35" height="0.95" fill="#4fc1ff" fill-opacity="0.5"/><rect x="1004.30" y="43.98" width="0.57" height="0.95" fill="#da70d6" fill-opacity="0.5"/><rect x="1004.30" y="46.36" width="0.57" height="0.95" fill="#da70d6" fill-opacity="0.5"/><rect x="1004.88" y="46.36" width="7.47" height="0.95" fill="#4ec9b0" fill-opacity="0.5"/><rect x="1012.35" y="46.36" width="0.57" height="0.95" fill="#cccccc" fill-opacity="0.5"/><rect x="1013.50" y="46.36" width="6.32" height="0.95" fill="#4ec9b0" fill-opacity="0.5"/><rect x="1019.83" y="46.36" width="0.57" height="0.95" fill="#179fff" fill-opacity="0.5"/><rect x="1020.40" y="46.36" width="5.17" height="0.95" fill="#ce9178" fill-opacity="0.5"/><rect x="1004.30" y="47.55" width="3.45" height="0.95" fill="#569cd6" fill-opacity="0.5"/><rect x="1008.33" y="47.55" width="3.45" height="0.95" fill="#569cd6" fill-opacity="0.5"/><rect x="1012.35" y="47.55" width="3.45" height="0.95" fill="#569cd6" fill-opacity="0.5"/><rect x="1016.38" y="47.55" width="5.17" height="0.95" fill="#dcdcaa" fill-opacity="0.5"/><rect x="1021.55" y="47.55" width="0.57" height="0.95" fill="#da70d6" fill-opacity="0.5"/><rect x="1022.12" y="47.55" width="3.45" height="0.95" fill="#569cd6" fill-opacity="0.5"/><rect x="1004.30" y="48.74" width="0.57" height="0.95" fill="#da70d6" fill-opacity="0.5"/><rect x="1006.60" y="49.93" width="1.15" height="0.95" fill="#c586c0" fill-opacity="0.5"/><rect x="1008.33" y="49.93" width="0.57" height="0.95" fill="#179fff" fill-opacity="0.5"/><rect x="1008.90" y="49.93" width="0.57" height="0.95" fill="#cccccc" fill-opacity="0.5"/><rect x="1009.48" y="49.93" width="4.60" height="0.95" fill="#4ec9b0" fill-opacity="0.5"/><rect x="1014.08" y="49.93" width="0.57" height="0.95" fill="#cccccc" fill-opacity="0.5"/><rect x="1014.65" y="49.93" width="4.60" height="0.95" fill="#dcdcaa" fill-opacity="0.5"/><rect x="1019.25" y="49.93" width="0.57" height="0.95" fill="#ffd700" fill-opacity="0.5"/><rect x="1019.83" y="49.93" width="6.32" height="0.95" fill="#9cdcfe" fill-opacity="0.5"/><rect x="1008.90" y="51.12" width="3.45" height="0.95" fill="#c586c0" fill-opacity="0.5"/><rect x="1012.92" y="51.12" width="4.60" height="0.95" fill="#ce9178" fill-opacity="0.5"/><rect x="1018.10" y="51.12" width="1.15" height="0.95" fill="#ce9178" fill-opacity="0.5"/><rect x="1019.83" y="51.12" width="2.88" height="0.95" fill="#ce9178" fill-opacity="0.5"/><rect x="1023.27" y="51.12" width="5.17" height="0.95" fill="#ce9178" fill-opacity="0.5"/><rect x="1006.60" y="53.50" width="3.45" height="0.95" fill="#569cd6" fill-opacity="0.5"/><rect x="1010.62" y="53.50" width="5.17" height="0.95" fill="#9cdcfe" fill-opacity="0.5"/><rect x="1016.38" y="53.50" width="0.57" height="0.95" fill="#cccccc" fill-opacity="0.5"/><rect x="1017.52" y="53.50" width="2.88" height="0.95" fill="#9cdcfe" fill-opacity="0.5"/><rect x="1020.40" y="53.50" width="0.57" height="0.95" fill="#cccccc" fill-opacity="0.5"/><rect x="1020.98" y="53.50" width="4.60" height="0.95" fill="#dcdcaa" fill-opacity="0.5"/><rect x="1008.90" y="54.69" width="1.72" height="0.95" fill="#569cd6" fill-opacity="0.5"/><rect x="1011.20" y="54.69" width="3.45" height="0.95" fill="#4ec9b0" fill-opacity="0.5"/><rect x="1014.65" y="54.69" width="0.57" height="0.95" fill="#cccccc" fill-opacity="0.5"/><rect x="1015.23" y="54.69" width="7.47" height="0.95" fill="#4ec9b0" fill-opacity="0.5"/><rect x="1022.70" y="54.69" width="0.57" height="0.95" fill="#cccccc" fill-opacity="0.5"/><rect x="1023.27" y="54.69" width="6.32" height="0.95" fill="#4ec9b0" fill-opacity="0.5"/><rect x="1006.60" y="55.88" width="2.30" height="0.95" fill="#569cd6" fill-opacity="0.5"/><rect x="1009.48" y="55.88" width="7.47" height="0.95" fill="#9cdcfe" fill-opacity="0.5"/><rect x="1017.52" y="55.88" width="0.57" height="0.95" fill="#cccccc" fill-opacity="0.5"/><rect x="1018.67" y="55.88" width="2.88" height="0.95" fill="#9cdcfe" fill-opacity="0.5"/><rect x="1021.55" y="55.88" width="0.57" height="0.95" fill="#cccccc" fill-opacity="0.5"/><rect x="1022.12" y="55.88" width="5.17" height="0.95" fill="#9cdcfe" fill-opacity="0.5"/><rect x="1006.60" y="58.26" width="3.45" height="0.95" fill="#c586c0" fill-opacity="0.5"/><rect x="1010.62" y="58.26" width="3.45" height="0.95" fill="#ce9178" fill-opacity="0.5"/><rect x="1014.65" y="58.26" width="0.57" height="0.95" fill="#569cd6" fill-opacity="0.5"/><rect x="1015.23" y="58.26" width="5.17" height="0.95" fill="#9cdcfe" fill-opacity="0.5"/><rect x="1020.40" y="58.26" width="0.57" height="0.95" fill="#569cd6" fill-opacity="0.5"/><rect x="1020.98" y="58.26" width="0.57" height="0.95" fill="#ce9178" fill-opacity="0.5"/><rect x="1022.12" y="58.26" width="1.15" height="0.95" fill="#ce9178" fill-opacity="0.5"/><rect x="1023.85" y="58.26" width="1.72" height="0.95" fill="#ce9178" fill-opacity="0.5"/><rect x="1004.30" y="59.45" width="0.57" height="0.95" fill="#da70d6" fill-opacity="0.5"/><rect x="1002.00" y="60.64" width="0.57" height="0.95" fill="#ffd700" fill-opacity="0.5"/></svg></div></body></html>
